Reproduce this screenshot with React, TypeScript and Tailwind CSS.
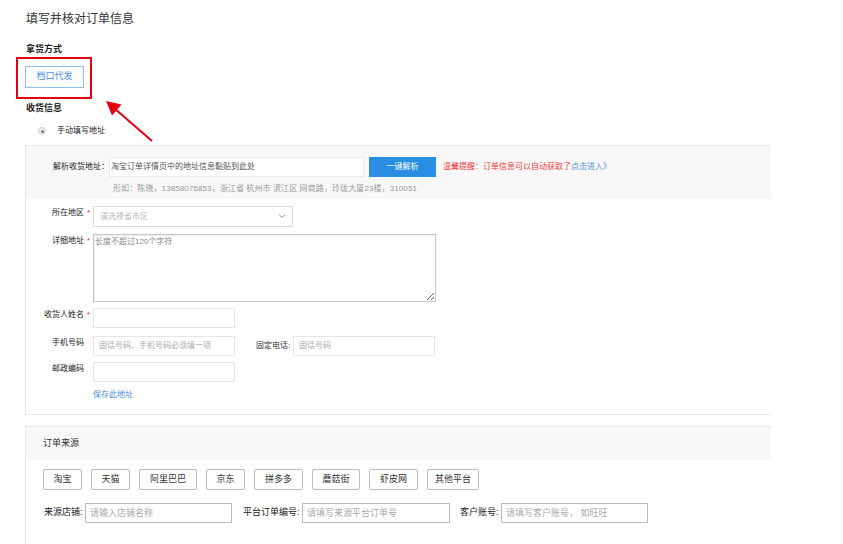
import React from "react";

const FONT = "font-['Liberation_Sans','Noto_Sans_CJK_SC',sans-serif]";

function Star() {
  return <span className="w-[9px] text-center text-[8px] leading-[12px] text-[#f22]">*</span>;
}

function Label({ text, star }: { text: string; star?: boolean }) {
  return (
    <div className="flex w-[67px] shrink-0 pt-[1px]">
      <span className="w-[58px] text-right text-[8px] leading-[12px] text-[#222]">{text}</span>
      {star ? <Star /> : <span className="w-[9px]" />}
    </div>
  );
}

function Box({ w, ph, pl = 5, border = "border-[#e6e6e6]", phColor = "text-[#aaa]", size = "text-[8px]" }: { w: string; ph?: string; pl?: number; border?: string; phColor?: string; size?: string }) {
  return (
    <div className={`${w} h-[20px] border ${border} bg-white flex items-center`} style={{ paddingLeft: pl }}>
      {ph ? <span className={`${size} leading-[12px] ${phColor} whitespace-nowrap`}>{ph}</span> : null}
    </div>
  );
}

export default function App() {
  const platforms: [string, string][] = [
    ["淘宝", "w-[39px]"],
    ["天猫", "w-[39px]"],
    ["阿里巴巴", "w-[58px]"],
    ["京东", "w-[39px]"],
    ["拼多多", "w-[49px]"],
    ["蘑菇街", "w-[48px]"],
    ["虾皮网", "w-[49px]"],
    ["其他平台", "w-[52px]"],
  ];
  return (
    <div className={`relative w-[843px] h-[544px] overflow-hidden bg-white text-[#333] ${FONT}`}>
      <div className="pl-[25px] pt-[11px]">
        <div className="pl-[1px] text-[12px] leading-[16px] text-[#333]">填写并核对订单信息</div>
        <div className="mt-[16px] pl-[1px] text-[9px] font-bold leading-[12px] text-[#222]">拿货方式</div>
        <div className="mt-[11px] flex h-[22px] w-[59px] items-center justify-center border border-[#8cbdee] text-[9px] text-[#4a90e2]">
          档口代发
        </div>
        <div className="mt-[14px] pl-[1px] text-[9px] font-bold leading-[12px] text-[#222]">收货信息</div>
        <div className="mt-[11px] flex h-[12px] items-center pl-[13px]">
          <span className="flex h-[8px] w-[8px] items-center justify-center rounded-full border border-[#ccc] bg-[#f3f3f3]">
            <span className="h-[3px] w-[3px] rounded-full bg-[#777]" />
          </span>
          <span className="ml-[11px] text-[8px] leading-[12px] text-[#222]">手动填写地址</span>
        </div>

        {/* Panel 1 */}
        <div className="mt-[8px] w-[746px] border-t border-b border-l border-[#e8e8e8]">
          <div className="h-[53px] bg-[#f8f8f8] pt-[11px]">
            <div className="flex h-[20px] items-center">
              <span className="w-[83px] text-right text-[8px] leading-[12px] text-[#222]">解析收货地址：</span>
              <Box w="w-[255px]" ph="淘宝订单详情页中的地址信息黏贴到此处" pl={1} phColor="text-[#555]" border="border-[#eaeaea]" />
              <div className="ml-[5px] flex h-[20px] w-[67px] items-center justify-center bg-[#2a8de4] text-[8px] text-white">一键解析</div>
              <span className="ml-[7px] text-[8px] text-[#f23c3c]">
                温馨提醒：订单信息可以自动获取了<span className="text-[#4a90e2]">点击进入》</span>
              </span>
            </div>
            <div className="mt-[6px] pl-[87px] text-[8px] leading-[12px] tracking-[0.1px] text-[#999]">
              形如：陈晓，13858076853，浙江省 杭州市 滨江区 网商路，玲珑大厦23楼，310051
            </div>
          </div>

          <div className="h-[215px] pt-[7px]">
            <div className="flex items-start">
              <Label text="所在地区" star />
              <div className="relative flex h-[21px] w-[200px] items-center border border-[#dcdcdc] bg-white pl-[6px]">
                <span className="text-[8px] text-[#bbb]">请选择省市区</span>
                <svg className="absolute right-[6px] top-[6px]" width="8" height="6" viewBox="0 0 8 6">
                  <path d="M1 1.5 L4 4.5 L7 1.5" fill="none" stroke="#888" strokeWidth="1" />
                </svg>
              </div>
            </div>
            <div className="mt-[7px] flex items-start">
              <Label text="详细地址" star />
              <textarea
                readOnly
                placeholder="长度不超过120个字符"
                className="h-[68px] w-[343px] border border-[#c8c8c8] bg-white px-[1px] pt-[1px] text-[8px] leading-[12px] shadow-[inset_1px_1px_1px_rgba(0,0,0,0.08)] outline-none placeholder:text-[#888]"
              />
            </div>
            <div className="mt-[6px] flex items-start">
              <Label text="收货人姓名" star />
              <Box w="w-[142px]" />
            </div>
            <div className="mt-[8px] flex items-start">
              <Label text="手机号码" />
              <Box w="w-[142px]" ph="固话号码、手机号码必须填一项" />
              <span className="ml-[21px] w-[37px] pt-[4px] text-[8px] leading-[12px] text-[#333]">固定电话:</span>
              <Box w="w-[142px]" ph="固话号码" />
            </div>
            <div className="mt-[6px] flex items-start">
              <Label text="邮政编码" />
              <Box w="w-[142px]" />
            </div>
            <div className="mt-[7px] pl-[67px] text-[8px] leading-[12px] text-[#4a90e2]">保存此地址</div>
          </div>
        </div>

        {/* Panel 2 */}
        <div className="mt-[11px] h-[200px] w-[746px] border-t border-l border-[#e8e8e8]">
          <div className="flex h-[33px] items-center bg-[#f8f8f8] pl-[17px] text-[9px] text-[#333]">订单来源</div>
          <div className="mt-[9px] flex gap-[9px] pl-[17px]">
            {platforms.map(([p, w]) => (
              <div key={p} className={`${w} flex h-[21px] shrink-0 items-center justify-center rounded-[2px] border border-[#bdbdbd] bg-white text-[9px] text-[#333]`}>
                {p}
              </div>
            ))}
          </div>
          <div className="mt-[13px] flex items-center pl-[18px]">
            <span className="w-[41px] text-[9px] text-[#222]">来源店铺:</span>
            <Box w="w-[147px]" ph="请输入店铺名称" border="border-[#bbb]" size="text-[9px]" pl={4} />
            <span className="ml-[11px] w-[59px] text-[9px] text-[#222]">平台订单编号:</span>
            <Box w="w-[148px]" ph="请填写来源平台订单号" border="border-[#bbb]" size="text-[9px]" pl={4} />
            <span className="ml-[10px] w-[41px] text-[9px] text-[#222]">客户账号:</span>
            <Box w="w-[147px]" ph="请填写客户账号， 如旺旺" border="border-[#bbb]" size="text-[9px]" pl={4} />
          </div>
        </div>
      </div>

      {/* Red highlight box */}
      <div className="absolute left-[16px] top-[57px] h-[42px] w-[76px] border-2 border-[#e60012]" />
      {/* Red arrow */}
      <svg className="absolute left-0 top-0" width="843" height="544" viewBox="0 0 843 544">
        <line x1="152" y1="141" x2="114" y2="108" stroke="#e60012" strokeWidth="2" />
        <polygon points="106,101 121.5,104.5 112,115.5" fill="#e60012" />
      </svg>
    </div>
  );
}
